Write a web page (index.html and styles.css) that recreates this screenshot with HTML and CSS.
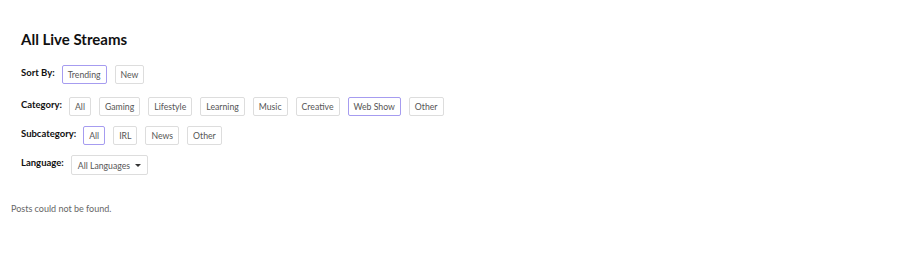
FILE: index.html
```html
<!DOCTYPE html>
<html lang="en">

<head>
  <meta charset="UTF-8">
  <meta name="viewport" content="width=device-width, initial-scale=1.0">
  <title>All Live Streams</title>
  <link rel="stylesheet" href="styles.css">
</head>

<body>
  <main class="streams">
    <section class="filters">
      <h2>All Live Streams</h2>

      <div class="filter-row sort-row">
        <span class="filter-label">Sort By:</span>
        <ul class="filter-list">
          <li><a class="chip active" href="#">Trending</a></li>
          <li><a class="chip" href="#">New</a></li>
        </ul>
      </div>

      <div class="filter-row">
        <span class="filter-label">Category:</span>
        <ul class="filter-list">
          <li><a class="chip" href="#">All</a></li>
          <li><a class="chip" href="#">Gaming</a></li>
          <li><a class="chip" href="#">Lifestyle</a></li>
          <li><a class="chip" href="#">Learning</a></li>
          <li><a class="chip" href="#">Music</a></li>
          <li><a class="chip" href="#">Creative</a></li>
          <li><a class="chip active" href="#">Web Show</a></li>
          <li><a class="chip" href="#">Other</a></li>
        </ul>
      </div>

      <div class="filter-row">
        <span class="filter-label">Subcategory:</span>
        <ul class="filter-list">
          <li><a class="chip active" href="#">All</a></li>
          <li><a class="chip" href="#">IRL</a></li>
          <li><a class="chip" href="#">News</a></li>
          <li><a class="chip" href="#">Other</a></li>
        </ul>
      </div>

      <div class="filter-row">
        <span class="filter-label">Language:</span>
        <button class="chip dropdown" type="button">All Languages <span class="caret"></span></button>
      </div>
    </section>

    <p class="empty">Posts could not be found.</p>
  </main>
</body>

</html>
```

FILE: styles.css
```css
body {
  font-family: Lato, "Noto Sans", Arial, sans-serif;
  margin: 0;
  padding: 0;
  color: #222;
}

.streams {
  padding: 0 11px;
}

.filters {
  padding: 29px 10px 0;
}

.filters h2 {
  font-size: 15px;
  font-weight: 700;
  line-height: 20px;
  margin: 0 0 16px;
  color: #111;
}

.filter-row {
  display: flex;
  align-items: flex-start;
  margin-bottom: 10px;
}

.sort-row {
  margin-bottom: 13px;
}

.filter-label {
  font-size: 9.5px;
  font-weight: 700;
  line-height: 16px;
  margin-right: 7px;
  color: #111;
}

.filter-list {
  display: flex;
  gap: 8px;
  list-style-type: none;
  margin: 0;
  padding: 0;
}

.chip {
  display: block;
  font-family: inherit;
  font-size: 8.7px;
  line-height: 17px;
  padding: 0 5px;
  color: #555;
  background: #fff;
  border: 1px solid #ddd;
  border-radius: 2px;
  text-decoration: none;
}

.chip.active {
  border-color: #a69cf0;
}

.dropdown {
  display: flex;
  align-items: center;
  gap: 5px;
  height: 20px;
  padding: 0 6px;
  cursor: pointer;
}

.caret {
  width: 0;
  height: 0;
  border-left: 3px solid transparent;
  border-right: 3px solid transparent;
  border-top: 3px solid #333;
}

.empty {
  font-size: 9px;
  color: #666;
  margin: 28px 0 0;
}
```
